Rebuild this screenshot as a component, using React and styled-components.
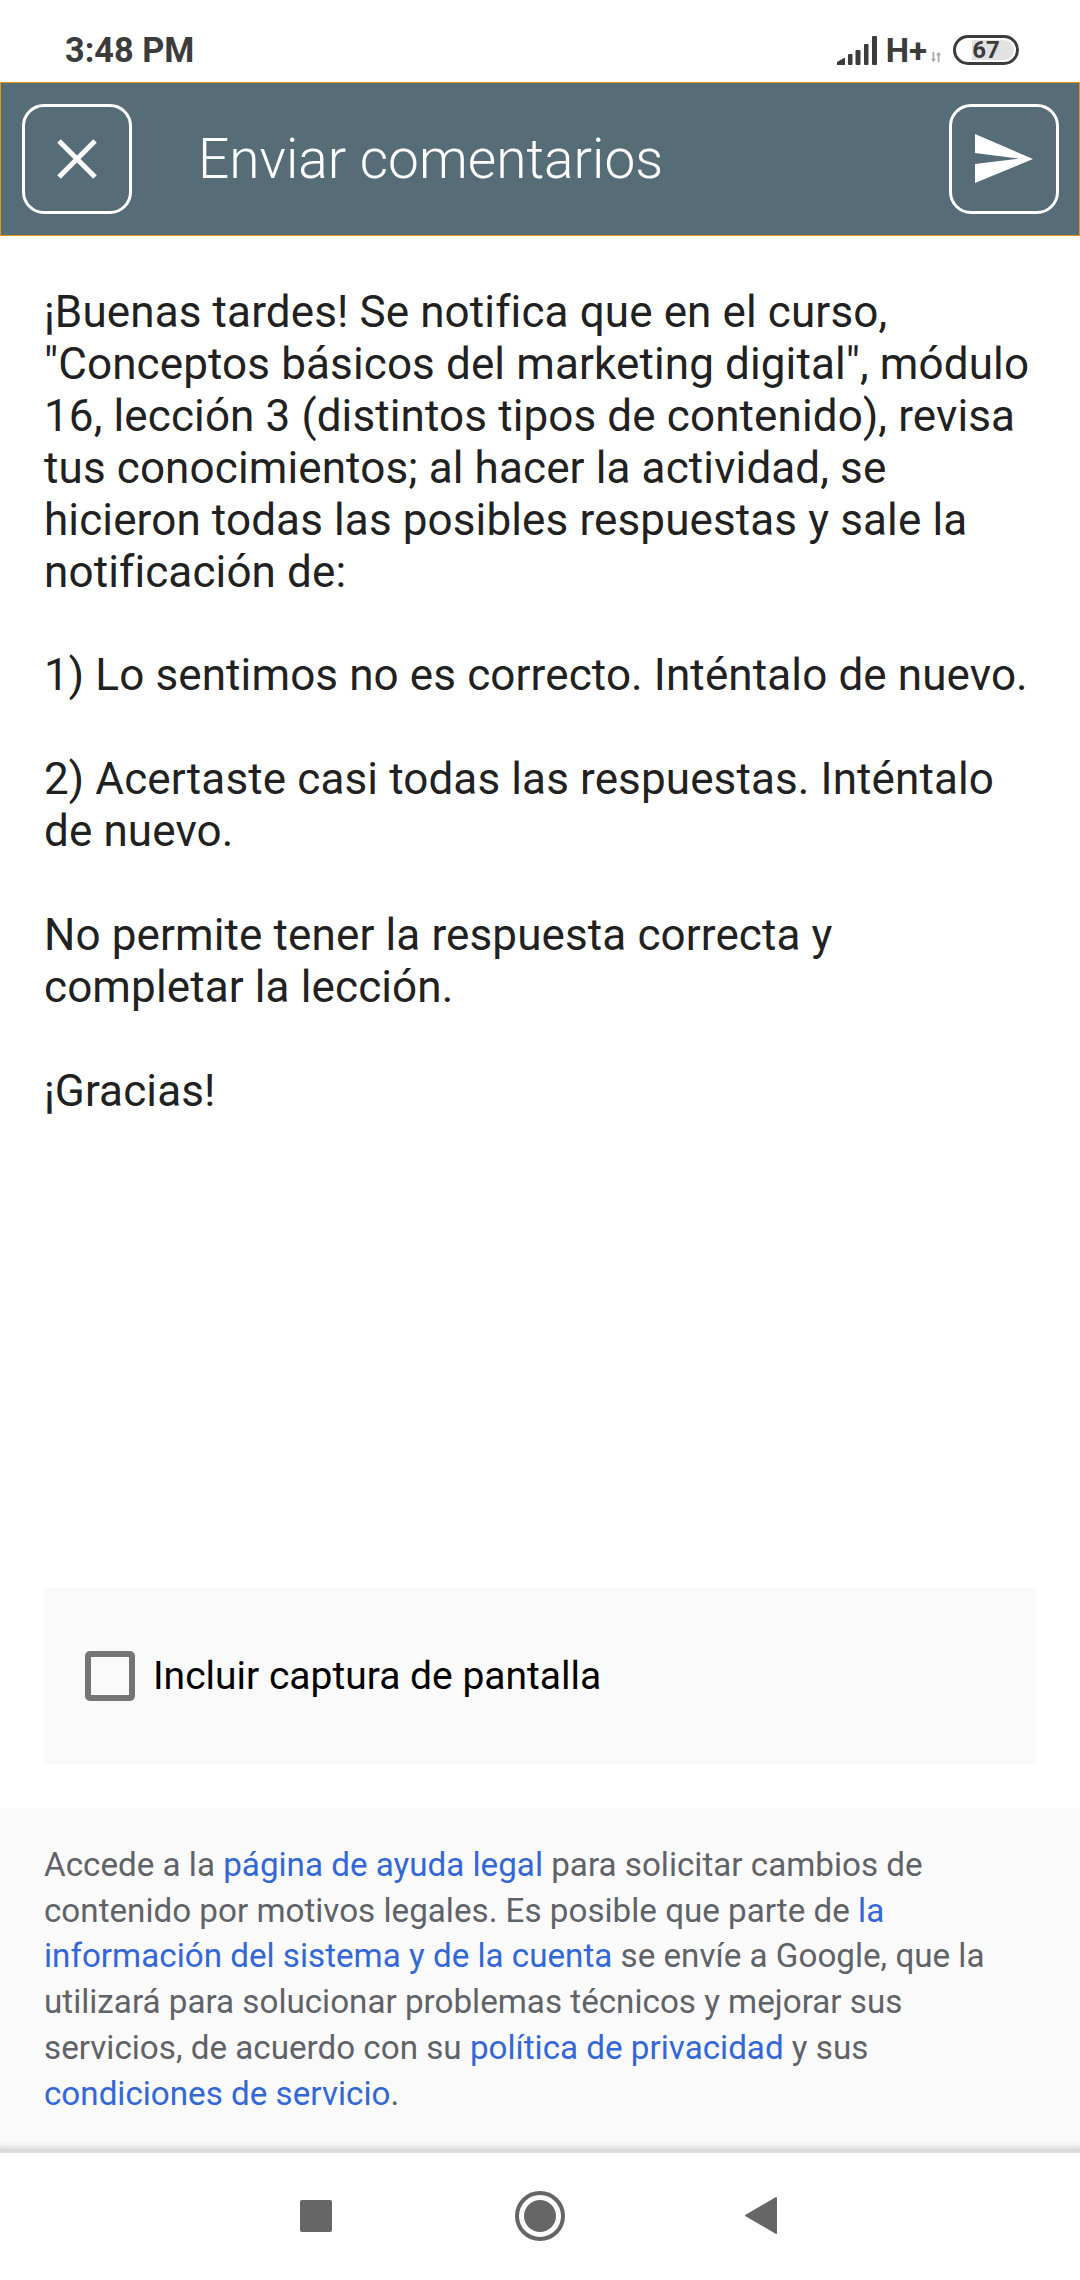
import styled, { createGlobalStyle } from "styled-components";

const GlobalStyle = createGlobalStyle`
  html, body {
    margin: 0;
    padding: 0;
    background: #fff;
  }
  body {
    font-family: Roboto, "Liberation Sans", sans-serif;
  }
`

const Screen = styled.div`
  width: 1080px;
  height: 2280px;
  display: flex;
  flex-direction: column;
  background: #fff;
  overflow: hidden;
`

const StatusBar = styled.div`
  height: 82px;
  flex-shrink: 0;
  box-sizing: border-box;
  display: flex;
  align-items: center;
  justify-content: space-between;
  padding: 18px 61px 0 65px;
`

const Clock = styled.div`
  font-size: 34.300px;
  font-weight: 700;
  color: #3c3c3c;
`

const StatusIcons = styled.div`
  display: flex;
  align-items: center;
`

const NetworkLabel = styled.span`
  font-size: 33px;
  font-weight: 700;
  color: #3c3c3c;
  margin-left: 9px;
  margin-right: 3px;
`

const Battery = styled.div`
  width: 66px;
  height: 30px;
  box-sizing: border-box;
  margin-left: 11px;
  border: 3px solid #3c3c3c;
  border-radius: 15px;
  display: flex;
  align-items: center;
  justify-content: center;
  padding: 2px;
  background: linear-gradient(90deg, #fff 0 16px, #e2e2e2 16px);
  background-clip: content-box;
  font-size: 24px;
  font-weight: 700;
  color: #3c3c3c;
`

const Toolbar = styled.div`
  height: 154px;
  flex-shrink: 0;
  box-sizing: border-box;
  display: flex;
  align-items: center;
  padding: 0 20px 0 21px;
  background: #566d78;
  border: 1.5px solid #e09a10;
`

const IconButton = styled.button`
  width: 110px;
  height: 110px;
  padding: 0;
  flex-shrink: 0;
  display: flex;
  align-items: center;
  justify-content: center;
  background: transparent;
  border: 3px solid #fff;
  border-radius: 22px;
`

const Title = styled.div`
  flex: 1;
  margin-left: 66px;
  font-size: 55px;
  font-weight: 300;
  color: #fff;
`

const Content = styled.div`
  height: 1352px;
  flex-shrink: 0;
  box-sizing: border-box;
  padding: 51px 44px 0;
`

const Message = styled.div`
  font-size: 44px;
  line-height: 51.900px;
  letter-spacing: 0.120px;
  color: #212121;
  white-space: pre-line;
`

const ScreenshotBox = styled.div`
  height: 176px;
  flex-shrink: 0;
  margin: 0 43px 44px 44px;
  display: flex;
  align-items: center;
  padding-left: 41px;
  gap: 18px;
  background: #fafafa;
`

const Checkbox = styled.div`
  width: 50px;
  height: 50px;
  box-sizing: border-box;
  border: 6px solid #757575;
  border-radius: 5px;
`

const CheckLabel = styled.div`
  font-size: 39px;
  color: #000;
`

const Legal = styled.div`
  height: 345px;
  flex-shrink: 0;
  box-sizing: border-box;
  padding: 34px 44px 0;
  background: #fafafa;
  font-size: 33.200px;
  line-height: 45.700px;
  color: #5f6368;
  border-bottom: 2px solid #dedede;
  box-shadow: inset 0 -9px 8px -7px #c4c4c4;
`

const LegalLink = styled.span`
  color: #3367d6;
`

const NavBar = styled.div`
  flex: 1;
  display: flex;
  align-items: center;
  justify-content: center;
`

const NavItem = styled.div`
  width: 224px;
  display: flex;
  justify-content: center;
  transform: translateY(-1px);
`

const message = `¡Buenas tardes! Se notifica que en el curso,
"Conceptos básicos del marketing digital", módulo
16, lección 3 (distintos tipos de contenido), revisa
tus conocimientos; al hacer la actividad, se
hicieron todas las posibles respuestas y sale la
notificación de:

1) Lo sentimos no es correcto. Inténtalo de nuevo.

2) Acertaste casi todas las respuestas. Inténtalo
de nuevo.

No permite tener la respuesta correcta y
completar la lección.

¡Gracias!`

export default function App() {
  return (
    <>
      <GlobalStyle />
      <Screen>
        <StatusBar>
          <Clock>3:48 PM</Clock>
          <StatusIcons>
            <svg width="40" height="29" viewBox="0 0 40 29" fill="#3c3c3c">
              <path d="M0 29v-3l7-4h1v7z" />
              <rect x="11" y="18" width="4.500" height="11" rx="1" />
              <rect x="18.500" y="14" width="5" height="15" rx="1" />
              <rect x="27" y="8" width="4.500" height="21" rx="1" />
              <rect x="35" y="0" width="5" height="29" rx="1" />
            </svg>
            <NetworkLabel>H+</NetworkLabel>
            <svg width="12" height="12" viewBox="0 0 14 12" fill="#a8a8a8" style={{ marginTop: 14 }}>
              <path d="M3 0h2v8h2l-3 4-3-4h2z" />
              <path d="M9 12h2V4h2l-3-4-3 4h2z" />
            </svg>
            <Battery>67</Battery>
          </StatusIcons>
        </StatusBar>
        <Toolbar>
          <IconButton>
            <svg width="40" height="40" viewBox="0 0 40 40" stroke="#fff" strokeWidth="5">
              <path d="M2 2l36 36M38 2L2 38" />
            </svg>
          </IconButton>
          <Title>Enviar comentarios</Title>
          <IconButton>
            <svg width="58" height="50" viewBox="0 0 58 50" fill="#fff">
              <path d="M0 0l58 25L0 49V30l44-5.500L0 19z" />
            </svg>
          </IconButton>
        </Toolbar>
        <Content>
          <Message>{message}</Message>
        </Content>
        <ScreenshotBox>
          <Checkbox />
          <CheckLabel>Incluir captura de pantalla</CheckLabel>
        </ScreenshotBox>
        <Legal>
          Accede a la <LegalLink>página de ayuda legal</LegalLink> para solicitar cambios de
          contenido por motivos legales. Es posible que parte de <LegalLink>la información del
          sistema y de la cuenta</LegalLink> se envíe a Google, que la utilizará para solucionar
          problemas técnicos y mejorar sus servicios, de acuerdo con su{" "}
          <LegalLink>política de privacidad</LegalLink> y sus{" "}
          <LegalLink>condiciones de servicio</LegalLink>.
        </Legal>
        <NavBar>
          <NavItem>
            <svg width="32" height="32" viewBox="0 0 32 32" fill="#666">
              <rect width="32" height="32" rx="2" />
            </svg>
          </NavItem>
          <NavItem>
            <svg width="50" height="50" viewBox="0 0 50 50" fill="#666">
              <circle cx="25" cy="25" r="16" />
              <circle cx="25" cy="25" r="23" fill="none" stroke="#666" strokeWidth="4" />
            </svg>
          </NavItem>
          <NavItem>
            <svg width="38" height="37" viewBox="0 0 38 37" fill="#666">
              <path d="M31 0a1 1 0 0 1 1 1v35a1 1 0 0 1-1 1L1 19.500a1 1 0 0 1 0-2z" />
            </svg>
          </NavItem>
        </NavBar>
      </Screen>
    </>
  )
}
